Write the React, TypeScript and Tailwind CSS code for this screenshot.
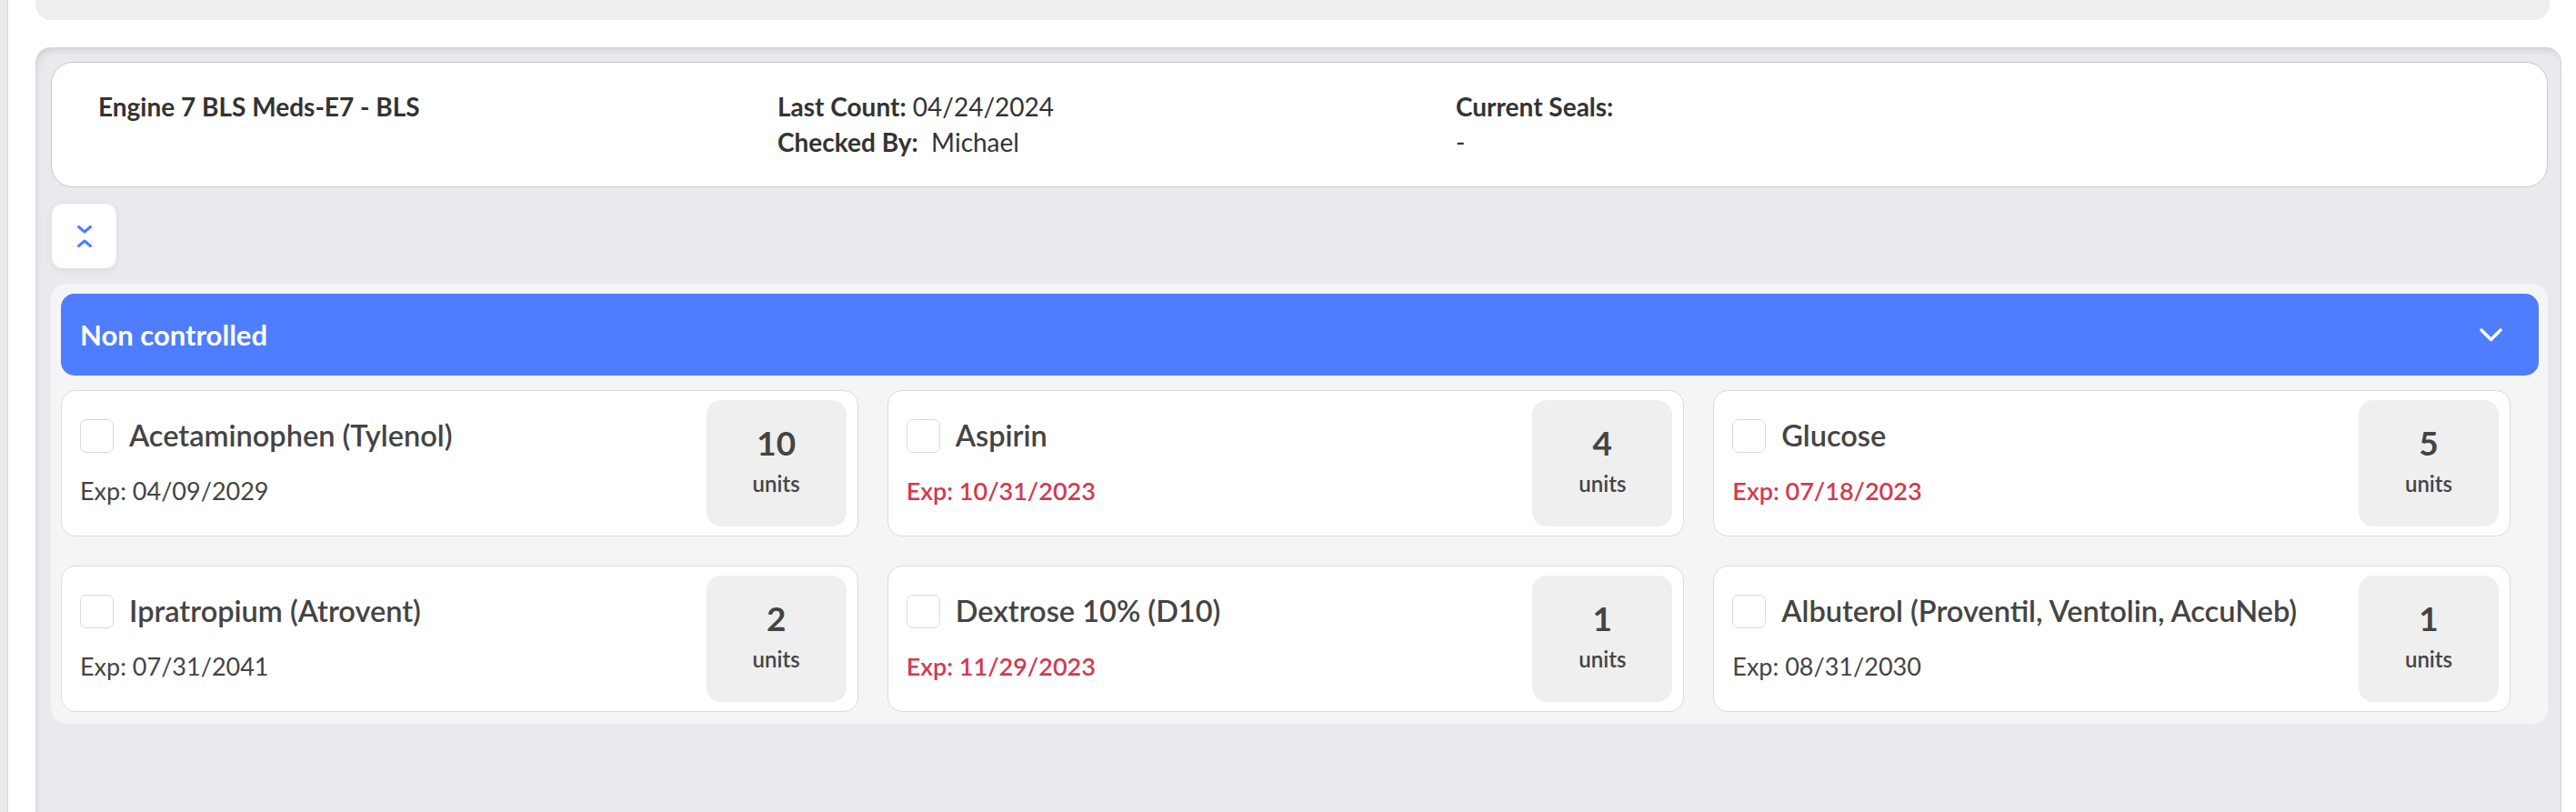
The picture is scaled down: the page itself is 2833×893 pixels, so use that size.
import React from "react";

type Med = { name: string; exp: string; expired: boolean; count: number };

const meds: Med[] = [
  { name: "Acetaminophen (Tylenol)", exp: "04/09/2029", expired: false, count: 10 },
  { name: "Aspirin", exp: "10/31/2023", expired: true, count: 4 },
  { name: "Glucose", exp: "07/18/2023", expired: true, count: 5 },
  { name: "Ipratropium (Atrovent)", exp: "07/31/2041", expired: false, count: 2 },
  { name: "Dextrose 10% (D10)", exp: "11/29/2023", expired: true, count: 1 },
  { name: "Albuterol (Proventil, Ventolin, AccuNeb)", exp: "08/31/2030", expired: false, count: 1 },
];

function MedCard({ m }: { m: Med }) {
  return (
    <div className="flex h-[161px] rounded-[16px] border border-[#dcdcdc] bg-white pt-[10px] pb-[10px] pl-[20px] pr-[12px]">
      <div className="flex flex-1 flex-col pt-[19px]">
        <div className="flex items-center gap-[17px]">
          <div className="h-[37px] w-[37px] shrink-0 rounded-[7px] border border-[#d9d9d9] bg-white" />
          <div className="text-[32.5px] leading-[40px] font-semibold text-[#444444]">{m.name}</div>
        </div>
        <div
          className={
            m.expired
              ? "mt-[23px] text-[27px] leading-[36px] font-semibold text-[#d33a50]"
              : "mt-[23px] text-[27px] leading-[36px] font-normal text-[#444444]"
          }
        >
          Exp: {m.exp}
        </div>
      </div>
      <div className="flex w-[154px] flex-col items-center rounded-[16px] bg-[#efefef] pt-[25px]">
        <div className="text-[37px] leading-[44px] font-bold text-[#444444]">{m.count}</div>
        <div className="mt-[8px] text-[24px] leading-[30px] font-semibold text-[#444444]">units</div>
      </div>
    </div>
  );
}

export default function App() {
  return (
    <div
      className="flex h-[893px] w-[2833px] overflow-hidden bg-white"
      style={{ fontFamily: "Lato, 'Open Sans', sans-serif" }}
    >
      <div className="w-[9px] shrink-0 border-r border-[#d6d6d6] bg-[#e9eaee]" />
      <div className="w-[30px] shrink-0" />
      <div className="flex w-[2778px] shrink-0 flex-col">
        <div className="mr-[13px] h-[22px] rounded-b-[17px] bg-[#efefef]" />
        <div className="mt-[30px] flex-1 rounded-t-[17px] border-r border-[#d4d4d4] bg-[#e9eaee] pt-[16px] pl-[17px] pr-[14px] shadow-[inset_3px_6px_10px_-4px_rgba(0,0,0,0.14)]">
          {/* header card */}
          <div className="flex h-[138px] rounded-[24px] border border-[#c8c8c8] bg-white px-[51px] pt-[29px] text-[28px] leading-[39px] text-[#333333]">
            <div className="w-[747px] shrink-0 font-bold">Engine 7 BLS Meds-E7 - BLS</div>
            <div className="w-[746px] shrink-0">
              <div>
                <span className="font-bold">Last Count:</span> 04/24/2024
              </div>
              <div>
                <span className="font-bold">Checked By:</span>&nbsp; Michael
              </div>
            </div>
            <div className="flex-1">
              <div className="font-bold">Current Seals:</div>
              <div>-</div>
            </div>
          </div>

          {/* collapse button */}
          <button className="mt-[17px] flex h-[73px] w-[73px] items-center justify-center rounded-[13px] border border-[#e3e3e6] bg-white shadow-[0_2px_6px_rgba(0,0,0,0.06)]">
            <svg width="18" height="26" viewBox="0 0 18 26" fill="none">
              <path d="M2.5 2.5 L9 8 L15.5 2.5" stroke="#4f7dff" strokeWidth="3" strokeLinecap="round" strokeLinejoin="round" />
              <path d="M2.5 23.5 L9 18 L15.5 23.5" stroke="#4f7dff" strokeWidth="3" strokeLinecap="round" strokeLinejoin="round" />
            </svg>
          </button>

          {/* accordion */}
          <div className="mt-[16px] rounded-[17px] bg-[#f5f5f5] pt-[11px] pb-[13px] pl-[11px] pr-[10px]">
            <div className="flex h-[90px] items-center justify-between rounded-[15px] bg-[#4f7dff] pl-[21px] pr-[40px]">
              <div className="text-[31px] font-bold text-white">Non controlled</div>
              <svg width="25" height="15" viewBox="0 0 25 15" fill="none">
                <path d="M2 2 L12.5 12.5 L23 2" stroke="#ffffff" strokeWidth="3.5" strokeLinecap="round" strokeLinejoin="round" />
              </svg>
            </div>
            <div className="mt-[16px] grid grid-cols-3 gap-x-[32px] gap-y-[32px] pr-[31px]">
              {meds.map((m) => (
                <MedCard key={m.name} m={m} />
              ))}
            </div>
          </div>
        </div>
      </div>
    </div>
  );
}
